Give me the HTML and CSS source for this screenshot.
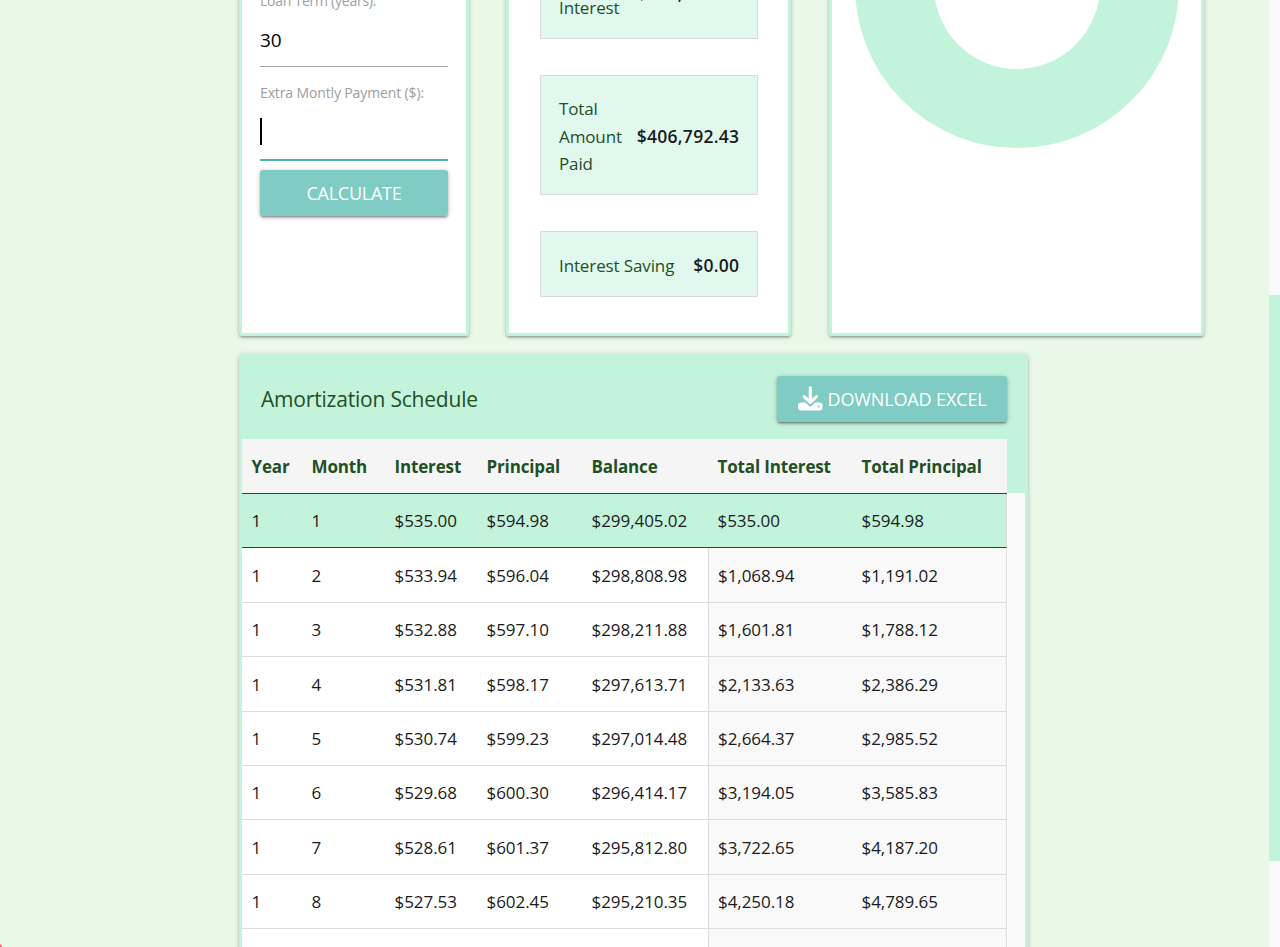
FILE: index.html
```
<!DOCTYPE html>
<html lang="en">
<head>
<meta charset="utf-8">
<title>Mortgage Calculator</title>
<link rel="stylesheet" href="styles.css">
</head>
<body>
<div class="page">
  <main class="content">
    <section class="cards">
      <form class="card form-card">
        <label class="field-label term-label">Loan Term (years):</label>
        <div class="field">30</div>
        <label class="field-label payment-label">Extra Montly Payment ($):</label>
        <div class="field focused"><span class="caret"></span></div>
        <button type="button" class="button calculate">CALCULATE</button>
      </form>
      <div class="card summary-card">
        <div class="stat"><span class="stat-name">Total Interest</span><b>$106,792.43</b></div>
        <div class="stat"><span class="stat-name">Total Amount Paid</span><b>$406,792.43</b></div>
        <div class="stat"><span class="stat-name">Interest Saving</span><b>$0.00</b></div>
      </div>
      <div class="card chart-card">
        <svg class="donut" width="326" height="326" viewBox="-163 -163 326 326"><circle r="122.5" fill="none" stroke="#c4f3dc" stroke-width="79"/></svg>
      </div>
    </section>
    <section class="card schedule">
      <header class="schedule-head">
        <h2>Amortization Schedule</h2>
        <button type="button" class="button download">
          <svg class="icon" width="26" height="26" viewBox="0 0 26 26"><rect x="1" y="16.4" width="24.5" height="8" rx="3.2" fill="#fff"/><path d="M6.5 11.2l6.8 6.6 6.8-6.6" fill="none" stroke="#80cbc4" stroke-width="5" stroke-linejoin="round"/><path d="M13.3 1.8v14M7.2 10.6l6.1 5.8 6.1-5.8" fill="none" stroke="#fff" stroke-width="3.2" stroke-linecap="round" stroke-linejoin="round"/><circle cx="21.6" cy="20.6" r="1" fill="#80cbc4"/></svg>
          <span>DOWNLOAD EXCEL</span>
        </button>
      </header>
      <div class="table-wrap">
        <table>
          <colgroup><col class="c1"><col class="c2"><col class="c3"><col class="c4"><col class="c5"><col class="c6"><col class="c7"></colgroup>
          <thead><tr><th>Year</th><th>Month</th><th>Interest</th><th>Principal</th><th>Balance</th><th>Total Interest</th><th>Total Principal</th></tr></thead>
          <tbody>
            <tr class="selected"><td>1</td><td>1</td><td>$535.00</td><td>$594.98</td><td>$299,405.02</td><td>$535.00</td><td>$594.98</td></tr>
            <tr><td>1</td><td>2</td><td>$533.94</td><td>$596.04</td><td>$298,808.98</td><td>$1,068.94</td><td>$1,191.02</td></tr>
            <tr><td>1</td><td>3</td><td>$532.88</td><td>$597.10</td><td>$298,211.88</td><td>$1,601.81</td><td>$1,788.12</td></tr>
            <tr><td>1</td><td>4</td><td>$531.81</td><td>$598.17</td><td>$297,613.71</td><td>$2,133.63</td><td>$2,386.29</td></tr>
            <tr><td>1</td><td>5</td><td>$530.74</td><td>$599.23</td><td>$297,014.48</td><td>$2,664.37</td><td>$2,985.52</td></tr>
            <tr><td>1</td><td>6</td><td>$529.68</td><td>$600.30</td><td>$296,414.17</td><td>$3,194.05</td><td>$3,585.83</td></tr>
            <tr><td>1</td><td>7</td><td>$528.61</td><td>$601.37</td><td>$295,812.80</td><td>$3,722.65</td><td>$4,187.20</td></tr>
            <tr><td>1</td><td>8</td><td>$527.53</td><td>$602.45</td><td>$295,210.35</td><td>$4,250.18</td><td>$4,789.65</td></tr>
            <tr><td></td><td></td><td></td><td></td><td></td><td></td><td></td></tr>
          </tbody>
        </table>
        <div class="table-track"></div>
      </div>
    </section>
  </main>
  <div class="scrollbar"><div class="thumb"></div></div>
  <span class="corner-badge"></span>
</div>
</body>
</html>
```
FILE: styles.css
```
* { box-sizing: border-box; }
body { margin: 0; height: 947px; overflow: hidden; }
.page {
  position: relative;
  display: flex;
  height: 947px;
  overflow: hidden;
  background: #e9f8e7;
  color: #1f4f25;
  font: 400 17px/27.5px "Open Sans", "Noto Sans", sans-serif;
}
.content { flex: 1; padding-left: 239px; }
.cards { display: flex; height: 436px; margin: -100px 0 18px; }
.card {
  border: 3px solid #c4f3dc;
  border-radius: 3px;
  background: #fff;
  box-shadow: 0 2px 2px rgba(0,0,0,.14), 0 3px 1px -2px rgba(0,0,0,.12), 0 1px 5px rgba(0,0,0,.2);
}
.cards .card { display: flex; flex-direction: column; }
.form-card { width: 230px; margin-right: 37px; padding: 0 18px 117px; justify-content: flex-end; }
.field-label { display: block; color: #9e9e9e; font-size: 14px; letter-spacing: -.13px; line-height: 20px; white-space: nowrap; }
.term-label { margin-bottom: 2px; letter-spacing: -.25px; }
.payment-label { margin: 16px 0 1px; }
.field { flex: none; display: flex; align-items: center; height: 54px; padding-top: 2px; border-bottom: 1px solid #9e9e9e; color: #000; font-size: 19px; letter-spacing: -.2px; }
.field.focused { height: 57px; border-bottom: 2px solid #4db6ac; margin-bottom: 9px; padding-top: 0; }
.caret { width: 2px; height: 27px; background: #000; }
.button {
  display: flex;
  align-items: center;
  justify-content: center;
  height: 46px;
  padding: 0;
  border: 0;
  border-radius: 3px;
  background: #80cbc4;
  color: #fff;
  font: 400 18px "Open Sans", "Noto Sans", sans-serif;
  box-shadow: 0 2px 2px rgba(0,0,0,.18), 0 3px 1px -2px rgba(0,0,0,.16), 0 1px 5px rgba(0,0,0,.24);
}
.calculate { flex: none; letter-spacing: -.25px; }
.summary-card { width: 285px; margin-right: 38px; padding: 0 30px 36px 31px; justify-content: flex-end; gap: 36px; }
.stat {
  flex: none;
  display: flex;
  align-items: center;
  justify-content: space-between;
  padding: 19px 18px 17px;
  border: 1px solid #dadada;
  background: #e1f8ee;
}
.stat:nth-child(2) { padding-bottom: 16.5px; }
.stat:last-child { padding: 20px 18px 16.5px; }
.stat-name { max-width: 68px; letter-spacing: -.12px; }
.stat:last-child .stat-name { max-width: none; }
.stat b { color: #1b1b1b; font-size: 17.5px; font-weight: 600; letter-spacing: .27px; margin-right: -.3px; }
.chart-card { width: 375px; align-items: center; }
.donut { flex: none; margin-top: -80px; }
.schedule { width: 789px; height: 620px; background: #c4f3dc; }
.schedule-head { display: flex; align-items: center; justify-content: space-between; height: 82px; padding: 1px 18px 0 19px; }
.schedule-head h2 { margin: 0; font-size: 21px; font-weight: 400; line-height: 30px; letter-spacing: -.2px; }
.download { width: 230px; gap: 4px; }
.download span { letter-spacing: -.13px; }
.table-wrap { display: flex; }
table { width: 765px; table-layout: fixed; border-collapse: separate; border-spacing: 0; }
.c1 { width: 60px; } .c2 { width: 83px; } .c3 { width: 92px; } .c4 { width: 105px; }
.c5 { width: 126px; } .c6 { width: 144px; } .c7 { width: 155px; }
th { height: 55px; padding: 2px 0 0 9.5px; border-bottom: 1px solid #1f4f25; background: #f5f5f5; text-align: left; font-weight: 700; letter-spacing: -.15px; white-space: nowrap; }
td { height: 54.4px; padding: 1px 0 0 9.5px; border-bottom: 1px solid #dcdcdc; background: #fff; color: #1b1b1b; letter-spacing: -.06px; }
td:nth-child(6), td:nth-child(7) { background: #f9f9f9; }
td:nth-child(6) { border-left: 1px solid #dcdcdc; padding-left: 9px; }
td:nth-child(7) { border-right: 1px solid #dcdcdc; }
.selected td, .selected td:nth-child(n) { border-bottom-color: #1f4f25; border-left: 0; padding-left: 9.5px; background: #c4f3dc; }
.table-track { flex: 1; margin-top: 54px; background: #f9f9f9; border-left: 1px solid #fff; }
.scrollbar { width: 11px; padding-top: 295px; background: #f9f9f9; }
.thumb { height: 566px; background: #c4f3dc; }
.corner-badge { position: absolute; left: -4px; top: 944px; width: 6px; height: 6px; border-radius: 50%; background: #ee6e73; }
```
